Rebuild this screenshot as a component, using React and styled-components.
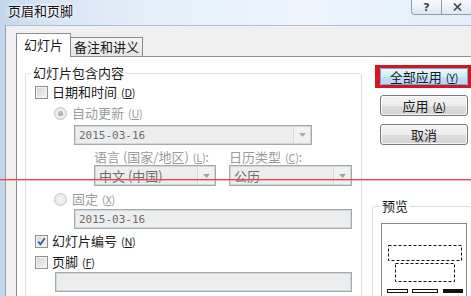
import React from 'react';
import styled, { createGlobalStyle, css } from 'styled-components';

const GlobalStyle = createGlobalStyle`
  html, body { margin: 0; padding: 0; }
  body {
    font-family: "Noto Sans CJK SC", "Noto Sans", "Liberation Sans", sans-serif;
    font-size: 13px;
    color: #1a1a1a;
    background: #f0f0f0;
  }
`;

const Window = styled.div`
  position: relative;
  width: 471px;
  height: 296px;
  overflow: hidden;
  display: flex;
  flex-direction: column;
  background: linear-gradient(90deg, #c2d7ec 0%, #d6e5f3 10%, #e6eff8 35%, #eef4fa 65%, #e4eef8 100%);
`;

const TitleBar = styled.div`
  height: 25px;
  flex-shrink: 0;
  display: flex;
  justify-content: space-between;
  align-items: flex-start;
  padding-left: 8px;
`;

const Title = styled.span`
  line-height: 22px;
  font-size: 13px;
  color: #111;
  text-shadow: 0 0 6px #fff, 0 0 3px #fff;
`;

const CaptionButtons = styled.div`
  display: flex;
  margin-right: -2px;
`;

const CaptionButton = styled.div`
  width: ${({ $w }) => $w}px;
  height: 15px;
  box-sizing: border-box;
  border: 1px solid #8d9fb4;
  border-top: none;
  ${({ $first }) => ($first ? css`border-radius: 0 0 0 4px;` : css`border-left: none;`)}
  background: linear-gradient(#f8fafd, #dfe7f0);
  display: flex;
  align-items: center;
  justify-content: center;
  color: #3a4350;
  font-family: "DejaVu Sans", sans-serif;
  font-size: 11px;
  font-weight: bold;
  line-height: 1;
`;

const Body = styled.div`
  flex: 1;
  min-height: 0;
  display: flex;
  flex-direction: column;
  margin-left: 5px;
  padding: 7px 0 0 10px;
  background: #f0f0f0;
  border-top: 1px solid #b0bfcf;
  border-left: 1px solid #8ba3bd;
`;

const TabRow = styled.div`
  height: 23px;
  flex-shrink: 0;
  display: flex;
  align-items: flex-end;
`;

const Tab = styled.div`
  box-sizing: border-box;
  width: ${({ $w }) => $w}px;
  border: 1px solid #898c95;
  border-bottom: none;
  display: flex;
  align-items: center;
  justify-content: center;
  line-height: 16px;
  ${({ $active }) =>
    $active
      ? css`
          height: 24px;
          margin-bottom: -1px;
          background: #fff;
          position: relative;
          z-index: 1;
          padding-bottom: 2px;
        `
      : css`
          height: 19px;
          margin-left: -1px;
          background: linear-gradient(#f4f4f4, #e4e4e4);
        `}
`;

const Panel = styled.div`
  flex: 1;
  display: flex;
  align-items: flex-start;
  background: #fff;
  border-top: 1px solid #898c95;
  border-left: 1px solid #898c95;
  padding: 8px 0 0 8px;
`;

const Group = styled.fieldset`
  box-sizing: border-box;
  width: ${({ $w }) => $w}px;
  height: ${({ $h }) => $h}px;
  min-width: 0;
  margin: ${({ $m }) => $m || 0};
  padding: 3px ${({ $px }) => $px}px 0;
  border: 1px solid #d5dfe5;
  border-radius: 3px;
  display: flex;
  flex-direction: column;
  flex-shrink: 0;
`;

const Legend = styled.legend`
  padding: 0 2px;
  margin-left: ${({ $ml }) => $ml}px;
  line-height: 16px;
  font-size: 13px;
  color: #1a1a1a;
`;

const Row = styled.div`
  display: flex;
  align-items: center;
  height: 16px;
  line-height: 16px;
  white-space: nowrap;
  margin-top: ${({ $mt }) => $mt || 0}px;
  margin-left: ${({ $indent }) => $indent || 0}px;
  color: ${({ $disabled }) => ($disabled ? '#9b9b9b' : '#1a1a1a')};
`;

const Key = styled.span`
  font-size: 11px;
  margin-left: 4px;
  letter-spacing: -0.3px;
  u { text-underline-offset: 1px; }
`;

const CheckBox = styled.span`
  box-sizing: border-box;
  width: 13px;
  height: 13px;
  margin-right: 4px;
  flex-shrink: 0;
  border: 1px solid #8e8f8f;
  background: linear-gradient(135deg, #d2d4d6, #f6f6f6);
  box-shadow: inset 0 0 0 1px #f4f4f4;
  display: flex;
  align-items: center;
  justify-content: center;
`;

const Radio = styled.span`
  box-sizing: border-box;
  width: 13px;
  height: 13px;
  margin-right: 5px;
  flex-shrink: 0;
  border-radius: 50%;
  border: 1px solid #c4c4c4;
  background: radial-gradient(circle at 50% 50%, #f6f6f6, #e2e2e2);
  display: flex;
  align-items: center;
  justify-content: center;
  &::after {
    content: '';
    width: 5px;
    height: 5px;
    border-radius: 50%;
    display: ${({ $on }) => ($on ? 'block' : 'none')};
    background: radial-gradient(circle at 40% 40%, #c8c8c8, #8f8f8f);
  }
`;

const Field = styled.div`
  box-sizing: border-box;
  display: flex;
  align-items: stretch;
  width: ${({ $w }) => $w}px;
  height: ${({ $h }) => $h || 20}px;
  margin-top: ${({ $mt }) => $mt || 0}px;
  margin-left: ${({ $indent }) => $indent || 0}px;
  border: 1px solid #a0aab2;
  box-shadow: inset 0 0 0 1px #d0d7dc;
  background: #ededed;
`;

const FieldText = styled.span`
  flex: 1;
  display: flex;
  align-items: center;
  padding-left: 4px;
  color: #6e6e6e;
  font-size: ${({ $mono }) => ($mono ? '11px' : '13px')};
  font-family: ${({ $mono }) => ($mono ? '"DejaVu Sans Mono", monospace' : 'inherit')};
  white-space: nowrap;
`;

const Arrow = styled.span`
  width: 16px;
  margin: 1px 1px 1px 0;
  border-left: 1px solid #d6dbde;
  background: #f1f1f1;
  display: flex;
  align-items: center;
  justify-content: center;
`;

const Pair = styled.div`
  display: grid;
  grid-template-columns: 122px 123px;
  grid-template-rows: 16px 21px;
  column-gap: 13px;
  margin-top: 4px;
  margin-left: 59px;
`;

const SmallLabel = styled.span`
  line-height: 16px;
  color: #9b9b9b;
  white-space: nowrap;
  font-size: 13px;
`;

const Side = styled.div`
  width: 97px;
  margin-left: 13px;
  flex-shrink: 0;
  display: flex;
  flex-direction: column;
`;

const Highlight = styled.div`
  box-sizing: border-box;
  width: 96px;
  border-style: solid;
  border-color: #d8141e;
  border-width: 3px 3px 3px 5px;
`;

const Button = styled.button`
  box-sizing: border-box;
  width: 88px;
  height: ${({ $h }) => $h || 21}px;
  margin: ${({ $mt }) => $mt || 0}px 0 0 ${({ $ml }) => $ml || 0}px;
  padding: 0;
  font: inherit;
  font-size: 13px;
  color: #1a1a1a;
  display: flex;
  align-items: center;
  justify-content: center;
  border-radius: 3px;
  ${({ $primary }) =>
    $primary
      ? css`
          border: 1px solid #6fa9d8;
          border-radius: 1px;
          background: linear-gradient(#eaf5fd, #d7ebfa 50%, #c2e0f8 51%, #b6d9f5);
        `
      : css`
          border: 1px solid #7b7b7b;
          background: linear-gradient(#f4f4f4, #ececec 50%, #dedede 51%, #d2d2d2);
          box-shadow: inset 0 0 0 1px rgba(255, 255, 255, 0.75);
        `}
`;

const PreviewBox = styled.div`
  box-sizing: border-box;
  width: 86px;
  height: 74px;
  margin-top: 6px;
  border: 1px solid #8a8a8a;
  background: #fff;
  display: flex;
`;

const RedLine = styled.div`
  position: absolute;
  left: 0;
  right: 0;
  top: 179px;
  height: 1px;
  background: #e8484c;
  box-shadow: 0 1px 0 rgba(240, 120, 124, 0.55);
  pointer-events: none;
`;

const Hot = ({ k }) => (
  <Key>
    (<u>{k}</u>)
  </Key>
);

const DownArrow = () => (
  <svg width="7" height="4" viewBox="0 0 7 4">
    <path d="M0 0 H7 L3.5 4 Z" fill="#a7a7a7" />
  </svg>
);

const Combo = ({ text, w, h, mt, indent, mono }) => (
  <Field $w={w} $h={h} $mt={mt} $indent={indent}>
    <FieldText $mono={mono}>{text}</FieldText>
    <Arrow>
      <DownArrow />
    </Arrow>
  </Field>
);

const Check = ({ on }) => (
  <CheckBox>
    {on && (
      <svg width="9" height="9" viewBox="0 0 9 9">
        <path d="M1.2 4.6 L3.4 7.2 L7.8 1.2" fill="none" stroke="#3d5fa6" strokeWidth="1.8" />
      </svg>
    )}
  </CheckBox>
);

const Preview = () => (
  <PreviewBox>
    <svg width="84" height="72" viewBox="0 0 84 72">
      <rect x="6.5" y="21.5" width="73" height="15" fill="none" stroke="#111" strokeDasharray="3 2" />
      <rect x="13.5" y="39.5" width="59" height="18" fill="none" stroke="#111" strokeDasharray="3 2" />
      <rect x="5.5" y="65.5" width="20" height="3" fill="none" stroke="#111" />
      <rect x="30.5" y="65.5" width="25" height="3" fill="none" stroke="#111" />
      <rect x="61" y="65" width="20" height="4" fill="#111" />
    </svg>
  </PreviewBox>
);

export default function App() {
  return (
    <Window>
      <GlobalStyle />
      <TitleBar>
        <Title>页眉和页脚</Title>
        <CaptionButtons>
          <CaptionButton $w={31} $first>?</CaptionButton>
          <CaptionButton $w={31}>
            <svg width="9" height="8" viewBox="0 0 9 8">
              <path d="M1 0.5 L8 7.5 M8 0.5 L1 7.5" stroke="#3a4350" strokeWidth="1.6" />
            </svg>
          </CaptionButton>
        </CaptionButtons>
      </TitleBar>

      <Body>
        <TabRow>
          <Tab $active $w={55}>幻灯片</Tab>
          <Tab $w={73}>备注和讲义</Tab>
        </TabRow>

        <Panel>
          <Group $w={337} $h={260} $px={9}>
            <Legend $ml={-4}>幻灯片包含内容</Legend>
            <Row>
              <Check />
              日期和时间<Hot k="D" />
            </Row>
            <Row $mt={5} $indent={19} $disabled>
              <Radio $on />
              自动更新<Hot k="U" />
            </Row>
            <Combo text="2015-03-16" w={238} mt={4} indent={39} mono />
            <Pair>
              <SmallLabel>
                语言 (国家/地区)<Hot k="L" />:
              </SmallLabel>
              <SmallLabel>
                日历类型<Hot k="C" />:
              </SmallLabel>
              <Combo text="中文 (中国)" w={122} h={21} />
              <Combo text="公历" w={123} h={21} />
            </Pair>
            <Row $mt={5} $indent={19} $disabled>
              <Radio />
              固定<Hot k="X" />
            </Row>
            <Field $w={278} $mt={2} $indent={39}>
              <FieldText $mono>2015-03-16</FieldText>
            </Field>
            <Row $mt={4}>
              <Check on />
              幻灯片编号<Hot k="N" />
            </Row>
            <Row $mt={5}>
              <Check />
              页脚<Hot k="F" />
            </Row>
            <Field $w={297} $mt={2} $indent={20} />
          </Group>

          <Side>
            <Highlight>
              <Button $primary $h={17}>
                全部应用<Hot k="Y" />
              </Button>
            </Highlight>
            <Button $mt={7} $ml={5}>
              应用<Hot k="A" />
            </Button>
            <Button $mt={8} $ml={5}>
              取消
            </Button>
            <Group $w={100} $h={120} $px={8} $m="53px 0 0 -3px">
              <Legend $ml={-1}>预览</Legend>
              <Preview />
            </Group>
          </Side>
        </Panel>
      </Body>
      <RedLine />
    </Window>
  );
}
